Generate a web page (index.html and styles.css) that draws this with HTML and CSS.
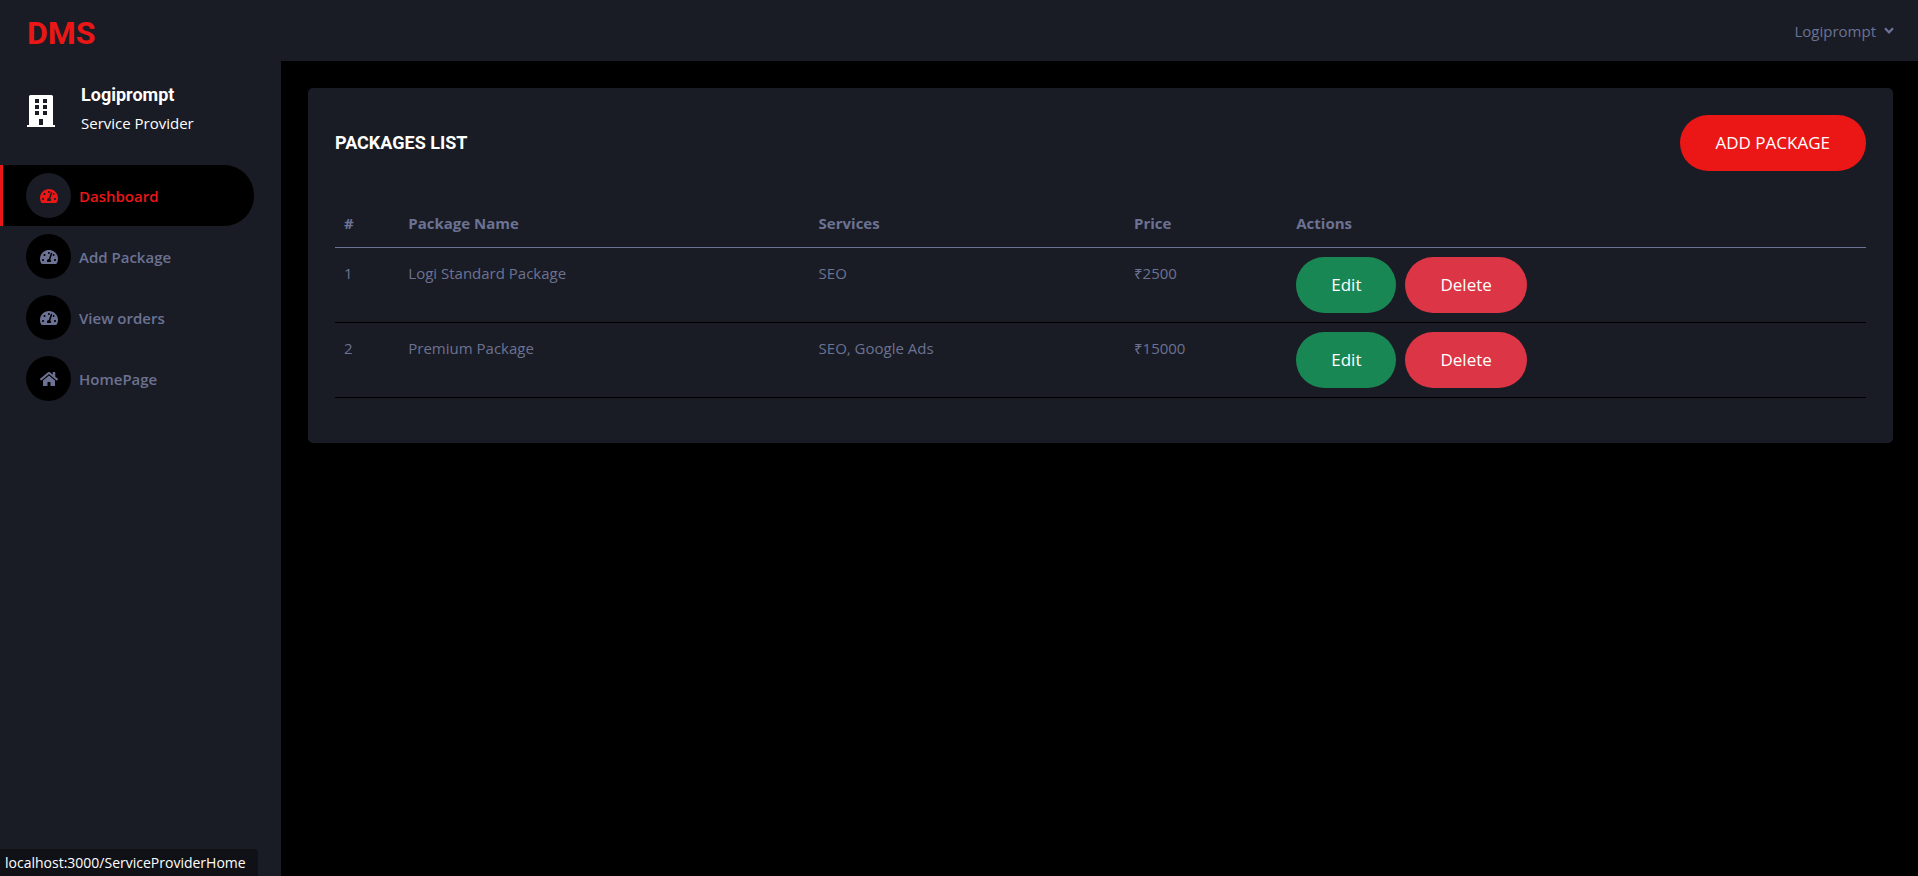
FILE: index.html
```html
<!DOCTYPE html>
<html lang="en">
<head>
<meta charset="utf-8">
<title>DMS</title>
<meta name="viewport" content="width=device-width, initial-scale=1">
<link rel="stylesheet" href="styles.css">
</head>
<body>
<svg class="sprite" aria-hidden="true">
  <symbol id="gauge" viewBox="0 0 576 512"><path d="M288 32C128.94 32 0 160.94 0 320c0 52.8 14.25 102.26 39.06 144.8 5.61 9.62 16.3 15.2 27.44 15.2h443c11.14 0 21.83-5.58 27.44-15.2C561.75 422.26 576 372.8 576 320c0-159.06-128.94-288-288-288zm0 64c14.71 0 26.58 10.13 30.32 23.65-1.11 2.26-2.64 4.23-3.45 6.67l-9.22 27.67c-5.13 3.49-10.97 6.01-17.64 6.01-17.67 0-32-14.33-32-32S270.33 96 288 96zM96 384c-17.67 0-32-14.33-32-32s14.33-32 32-32 32 14.33 32 32-14.33 32-32 32zm48-160c-17.67 0-32-14.33-32-32s14.33-32 32-32 32 14.33 32 32-14.33 32-32 32zm246.77-72.41l-61.33 184C343.13 347.33 352 364.54 352 384c0 11.72-3.38 22.55-8.88 32H232.88c-5.5-9.45-8.88-20.28-8.88-32 0-33.94 26.5-61.43 59.9-63.59l61.34-184.01c4.17-12.56 17.73-19.45 30.36-15.17 12.57 4.19 19.35 17.79 15.17 30.36zm14.66 57.2l15.52-46.55c3.47-1.29 7.13-2.23 11.05-2.23 17.67 0 32 14.33 32 32s-14.33 32-32 32c-11.38-.01-20.89-6.28-26.57-15.22zM480 384c-17.67 0-32-14.33-32-32s14.33-32 32-32 32 14.33 32 32-14.33 32-32 32z"/></symbol>
  <symbol id="home" viewBox="0 0 576 512"><path d="M280.37 148.26L96 300.11V464a16 16 0 0 0 16 16l112.06-.29a16 16 0 0 0 15.92-16V368a16 16 0 0 1 16-16h64a16 16 0 0 1 16 16v95.64a16 16 0 0 0 16 16.05L464 480a16 16 0 0 0 16-16V300L295.67 148.26a12.19 12.19 0 0 0-15.3 0zM571.6 251.47L488 182.56V44.05a12 12 0 0 0-12-12h-56a12 12 0 0 0-12 12v72.61L318.47 43a48 48 0 0 0-61 0L4.34 251.47a12 12 0 0 0-1.6 16.9l25.5 31A12 12 0 0 0 45.15 301l235.22-193.74a12.19 12.19 0 0 1 15.3 0L530.9 301a12 12 0 0 0 16.9-1.6l25.5-31a12 12 0 0 0-1.7-16.93z"/></symbol>
</svg>
<header class="topbar">
  <a class="brand" href="#">DMS</a>
  <button class="account" type="button">Logiprompt
    <svg class="chevron" viewBox="0 0 10 7" aria-hidden="true"><path d="M1 1.300l4 4 4-4" fill="none" stroke="currentColor" stroke-width="2.300"/></svg>
  </button>
</header>
<div class="shell">
  <aside class="sidebar">
    <div class="profile">
      <svg class="building" viewBox="0 0 28 32" aria-hidden="true"><path fill="#fff" fill-rule="evenodd" d="M2 30V1.500Q2 0 3.500 0h21Q26 0 26 1.500V30h2V32H0v-2zM8 4v4h4V4zm8 0v4h4V4zM8 10v4h4v-4zm8 0v4h4v-4zM8 16v4h4v-4zm8 0v4h4v-4zM12 24v6h4v-6z"/></svg>
      <div>
        <h2 class="profile-name">Logiprompt</h2>
        <p class="profile-role">Service Provider</p>
      </div>
    </div>
    <nav class="nav">
      <a class="nav-link active" href="#"><span class="nav-icon"><svg><use href="#gauge"/></svg></span>Dashboard</a>
      <a class="nav-link" href="#"><span class="nav-icon"><svg><use href="#gauge"/></svg></span>Add Package</a>
      <a class="nav-link" href="#"><span class="nav-icon"><svg><use href="#gauge"/></svg></span>View orders</a>
      <a class="nav-link" href="#"><span class="nav-icon"><svg><use href="#home"/></svg></span>HomePage</a>
    </nav>
  </aside>
  <main class="content">
    <section class="card">
      <div class="card-head">
        <h1 class="card-title">PACKAGES LIST</h1>
        <button class="btn btn-primary" type="button">ADD PACKAGE</button>
      </div>
      <table class="packages">
        <colgroup><col class="c-num"><col class="c-name"><col class="c-services"><col class="c-price"><col></colgroup>
        <thead>
          <tr><th scope="col">#</th><th scope="col">Package Name</th><th scope="col">Services</th><th scope="col">Price</th><th scope="col">Actions</th></tr>
        </thead>
        <tbody>
          <tr><td>1</td><td>Logi Standard Package</td><td>SEO</td><td>₹2500</td><td><div class="actions"><button class="btn btn-edit" type="button">Edit</button><button class="btn btn-delete" type="button">Delete</button></div></td></tr>
          <tr><td>2</td><td>Premium Package</td><td>SEO, Google Ads</td><td>₹15000</td><td><div class="actions"><button class="btn btn-edit" type="button">Edit</button><button class="btn btn-delete" type="button">Delete</button></div></td></tr>
        </tbody>
      </table>
    </section>
  </main>
</div>
<div class="status">localhost:3000/ServiceProviderHome</div>
</body>
</html>
```
FILE: styles.css
```css
* { box-sizing: border-box; }
body {
  margin: 0;
  min-height: 100vh;
  display: flex;
  flex-direction: column;
  background: #000;
  color: #6c7293;
  font: 400 15px/24px "Open Sans", "Noto Sans", sans-serif;
}
h1, h2, p { margin: 0; }
a { color: inherit; text-decoration: none; }
button { font: inherit; color: inherit; border: 0; background: none; padding: 0; cursor: pointer; }
.sprite { display: none; }

.topbar {
  display: flex;
  align-items: center;
  justify-content: space-between;
  height: 61px;
  padding: 0 24px 0 27px;
  background: #191c24;
}
.brand { font: 700 32px/40px Roboto, sans-serif; color: #eb1616; padding-top: 4px; }
.account { display: flex; align-items: center; gap: 8px; }
.chevron { width: 10px; height: 7px; }

.shell { flex: 1; display: flex; }
.sidebar { flex: 0 0 281px; background: #191c24; }
.profile { display: flex; align-items: flex-end; gap: 26px; padding: 20px 27px 28px; color: #fff; }
.building { width: 28px; height: 32px; margin-bottom: 10px; }
.profile-name { font: 700 18px/28px Roboto, sans-serif; }
.profile-role { line-height: 28px; }
.nav { padding-right: 27px; }
.nav-link {
  display: flex;
  align-items: center;
  gap: 8px;
  height: 61px;
  padding-left: 23px;
  border-left: 3px solid transparent;
  border-radius: 0 30px 30px 0;
  font-weight: 600;
}
.nav-icon {
  display: flex;
  align-items: center;
  justify-content: center;
  width: 45px;
  height: 45px;
  border-radius: 50%;
  background: #000;
}
.nav-icon svg { width: 18px; height: 16px; fill: currentColor; }
.active { background: #000; color: #eb1616; border-color: #eb1616; }
.active .nav-icon { background: #191c24; }

.content { flex: 1; padding: 27px 25px 27px 27px; }
.card { padding: 27px 27px 45px; border-radius: 5px; background: #191c24; }
.card-head { display: flex; align-items: center; justify-content: space-between; margin-bottom: 31px; }
.card-title { font: 700 18px/24px Roboto, sans-serif; color: #fff; }
.btn { height: 56px; padding: 0 35px; border-radius: 28px; color: #fff; font-size: 17px; white-space: nowrap; }
.btn-primary { padding: 0 36px; background: #eb1616; }
.btn-edit { background: #198754; }
.btn-delete { background: #dc3545; }

.packages { width: 100%; table-layout: fixed; border-collapse: collapse; text-align: left; }
.packages th, .packages td { padding: 9px; vertical-align: top; border-bottom: 1px solid #000; }
.packages th { font-weight: 700; padding-bottom: 12px; border-color: #6c7293; }
.packages td { line-height: 32px; }
.c-num { width: 4.2%; }
.c-name { width: 26.8%; }
.c-services { width: 20.6%; }
.c-price { width: 10.6%; }
.actions { display: flex; gap: 9px; }

.status {
  position: fixed;
  left: 0;
  bottom: 0;
  padding: 2px 12px 1px 5px;
  border-radius: 0 4px 0 0;
  background: #101116;
  color: #fff;
  font-size: 14px;
}
```
